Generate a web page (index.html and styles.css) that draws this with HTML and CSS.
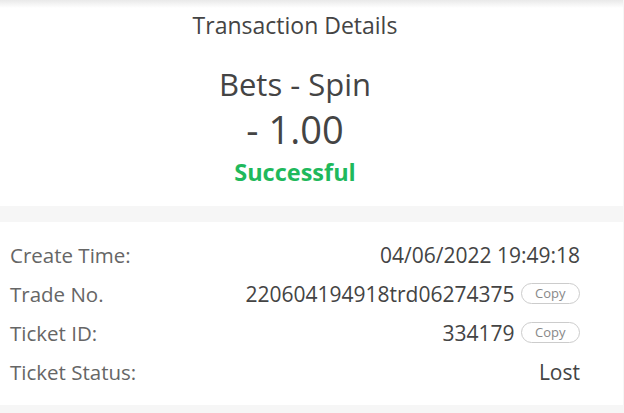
FILE: index.html
```html
<!DOCTYPE html>
<html>
<head>
<meta charset="utf-8">
<link rel="stylesheet" href="styles.css">
</head>
<body>
<div class="shade"></div>
<section class="summary">
  <div class="title">Transaction Details</div>
  <div class="kind">Bets - Spin</div>
  <div class="amount">- 1.00</div>
  <div class="status">Successful</div>
</section>
<section class="details">
  <div class="row"><span class="label">Create Time:</span><span class="value">04/06/2022 19:49:18</span></div>
  <div class="row"><span class="label">Trade No.</span><span class="value">220604194918trd06274375<span class="copy">Copy</span></span></div>
  <div class="row"><span class="label">Ticket ID:</span><span class="value">334179<span class="copy">Copy</span></span></div>
  <div class="row"><span class="label">Ticket Status:</span><span class="value">Lost</span></div>
</section>
</body>
</html>
```
FILE: styles.css
```css
html, body {
  margin: 0;
  padding: 0;
}
body {
  width: 624px;
  height: 413px;
  overflow: hidden;
  background: #f6f6f6;
  font-family: "Open Sans", "Noto Sans", sans-serif;
  color: #444;
}
.shade {
  height: 8px;
  background: linear-gradient(#e9e9e9, #ffffff);
  margin-right: 1px;
}
.summary {
  background: #fff;
  margin-right: 1px;
  padding-right: 33px;
  height: 198px;
  display: flex;
  flex-direction: column;
  align-items: center;
}
.title {
  font-size: 23px;
  line-height: 34px;
  color: #444;
}
.kind {
  margin-top: 22px;
  font-size: 31px;
  line-height: 40px;
  color: #444;
}
.amount {
  font-size: 38px;
  line-height: 50px;
  color: #444;
}
.status {
  font-size: 23.5px;
  font-weight: 700;
  line-height: 36px;
  color: #1fb95c;
}
.details {
  margin-top: 16px;
  margin-right: 1px;
  background: #fff;
  height: 183px;
  padding: 13px 43px 0 10px;
  box-sizing: border-box;
  display: flex;
  flex-direction: column;
}
.row {
  display: flex;
  justify-content: space-between;
  align-items: center;
  height: 39px;
  font-size: 21px;
}
.label {
  color: #666;
  font-size: 20.5px;
}
.value {
  color: #444;
  display: flex;
  align-items: center;
}
.copy {
  margin-left: 6px;
  font-size: 13px;
  line-height: 19px;
  padding: 0 13.5px;
  border: 1px solid #ccc;
  border-radius: 11px;
  color: #888;
}
```
